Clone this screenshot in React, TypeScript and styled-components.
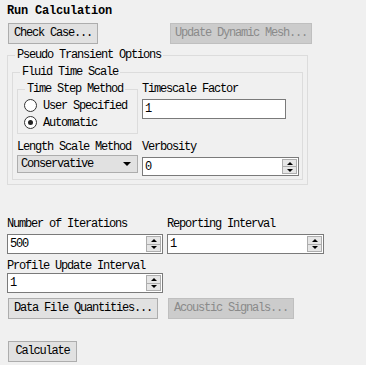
import styled, { createGlobalStyle } from "styled-components";

const GlobalStyle = createGlobalStyle`
  html, body {
    margin: 0;
    padding: 0;
    background: #f0f0f0;
  }
  body {
    font-family: "Liberation Mono", "DejaVu Sans Mono", monospace;
    font-size: 12px;
    color: #000;
  }
  * {
    box-sizing: border-box;
  }
`;

const Page = styled.div`
  width: 366px;
  height: 365px;
  padding: 4px 0 0 7px;
  overflow: hidden;
  letter-spacing: -1.2px;
`;

const Title = styled.div`
  font-weight: bold;
  line-height: 14px;
  letter-spacing: -0.2px;
`;

const ButtonRow = styled.div<{ $top: number }>`
  display: flex;
  margin-top: ${({ $top }) => $top}px;
  padding-left: 1px;
`;

const Button = styled.button<{ $w: number; $ml?: number }>`
  width: ${({ $w }) => $w}px;
  height: 21px;
  margin: 0 0 0 ${({ $ml }) => $ml ?? 0}px;
  padding: 0;
  border: 1px solid #adadad;
  background: #e1e1e1;
  color: #000;
  font-family: inherit;
  font-size: 12px;
  letter-spacing: -1.2px;
  line-height: 19px;
  text-align: center;
  white-space: nowrap;
  &:disabled {
    background: #cccccc;
    border-color: #bfbfbf;
    color: #8a8a8a;
  }
`;

const Group = styled.fieldset<{ $pad: string; $w?: number; $top?: number }>`
  margin: ${({ $top }) => $top ?? 0}px 0 0 0;
  min-width: 0;
  width: ${({ $w }) => ($w ? `${$w}px` : "auto")};
  border: 1px solid #dcdcdc;
  padding: ${({ $pad }) => $pad};
`;

const Legend = styled.legend`
  margin-left: 3px;
  padding: 0 2px;
  line-height: 14px;
`;

const FluidGrid = styled.div`
  display: grid;
  grid-template-columns: 121px 1fr;
  column-gap: 4px;
  align-items: start;
`;

const Column = styled.div<{ $top?: number }>`
  display: flex;
  flex-direction: column;
  margin-top: ${({ $top }) => $top ?? 0}px;
`;

const Label = styled.div`
  line-height: 14px;
  white-space: nowrap;
`;

const RadioRow = styled.label`
  display: flex;
  align-items: center;
  gap: 6px;
  height: 17px;
  padding-left: 2px;
`;

const RadioCircle = styled.span<{ $checked?: boolean }>`
  width: 13px;
  height: 13px;
  border-radius: 50%;
  border: 1px solid #333;
  background: #fff;
  display: flex;
  align-items: center;
  justify-content: center;
  &::after {
    content: "";
    width: 5px;
    height: 5px;
    border-radius: 50%;
    background: ${({ $checked }) => ($checked ? "#222" : "transparent")};
  }
`;

const Field = styled.div<{ $w?: number; $h: number; $top: number }>`
  display: flex;
  align-items: stretch;
  width: ${({ $w }) => ($w ? `${$w}px` : "100%")};
  height: ${({ $h }) => $h}px;
  margin-top: ${({ $top }) => $top}px;
  border: 1px solid #7a7a7a;
  background: #fff;
  padding: 1px 1px 1px 2px;
`;

const FieldText = styled.span`
  flex: 1;
  display: flex;
  align-items: center;
`;

const Spinner = styled.div`
  width: 15px;
  border: 1px solid #adadad;
  background: #e6e6e6;
  display: flex;
  flex-direction: column;
`;

const SpinHalf = styled.div<{ $down?: boolean }>`
  flex: 1;
  display: flex;
  align-items: center;
  justify-content: center;
  border-top: ${({ $down }) => ($down ? "1px solid #adadad" : "none")};
  &::after {
    content: "";
    border-left: 3px solid transparent;
    border-right: 3px solid transparent;
    ${({ $down }) =>
      $down ? "border-top: 3px solid #000;" : "border-bottom: 3px solid #000;"}
  }
`;

const Select = styled.div`
  height: 18px;
  margin-top: 1px;
  border: 1px solid #adadad;
  background: #e1e1e1;
  display: flex;
  align-items: center;
  justify-content: space-between;
  padding: 0 6px 0 3px;
  &::after {
    content: "";
    border-left: 4px solid transparent;
    border-right: 4px solid transparent;
    border-top: 4px solid #000;
  }
`;

const LowerGrid = styled.div`
  display: grid;
  grid-template-columns: 156px 157px;
  column-gap: 4px;
  margin-top: 32px;
`;

function SpinField({ value, w, h, top }: { value: string; w?: number; h: number; top: number }) {
  return (
    <Field $w={w} $h={h} $top={top}>
      <FieldText>{value}</FieldText>
      <Spinner>
        <SpinHalf />
        <SpinHalf $down />
      </Spinner>
    </Field>
  );
}

export default function App() {
  return (
    <>
      <GlobalStyle />
      <Page>
        <Title>Run Calculation</Title>
        <ButtonRow $top={5}>
          <Button $w={90}>Check Case...</Button>
          <Button $w={142} $ml={72} disabled>
            Update Dynamic Mesh...
          </Button>
        </ButtonRow>

        <Group $w={301} $top={4} $pad="3px 4px 4px 4px">
          <Legend>Pseudo Transient Options</Legend>
          <Group $pad="3px 3px 3px 4px">
            <Legend>Fluid Time Scale</Legend>
            <FluidGrid>
              <Group $pad="1px 4px 2px 4px">
                <Legend>Time Step Method</Legend>
                <RadioRow>
                  <RadioCircle />
                  User Specified
                </RadioRow>
                <RadioRow>
                  <RadioCircle $checked />
                  Automatic
                </RadioRow>
              </Group>
              <Column>
                <Label>Timescale Factor</Label>
                <Field $w={144} $h={20} $top={3}>
                  <FieldText>1</FieldText>
                </Field>
              </Column>
              <Column $top={6}>
                <Label>Length Scale Method</Label>
                <Select>Conservative</Select>
              </Column>
              <Column $top={6}>
                <Label>Verbosity</Label>
                <SpinField value="0" h={19} top={3} />
              </Column>
            </FluidGrid>
          </Group>
        </Group>

        <LowerGrid>
          <Column>
            <Label>Number of Iterations</Label>
            <SpinField value="500" h={20} top={3} />
          </Column>
          <Column>
            <Label>Reporting Interval</Label>
            <SpinField value="1" h={20} top={3} />
          </Column>
          <Column $top={5}>
            <Label>Profile Update Interval</Label>
            <SpinField value="1" h={20} top={0} />
          </Column>
        </LowerGrid>

        <ButtonRow $top={5}>
          <Button $w={150}>Data File Quantities...</Button>
          <Button $w={126} $ml={10} disabled>
            Acoustic Signals...
          </Button>
        </ButtonRow>
        <ButtonRow $top={22}>
          <Button $w={69}>Calculate</Button>
        </ButtonRow>
      </Page>
    </>
  );
}
